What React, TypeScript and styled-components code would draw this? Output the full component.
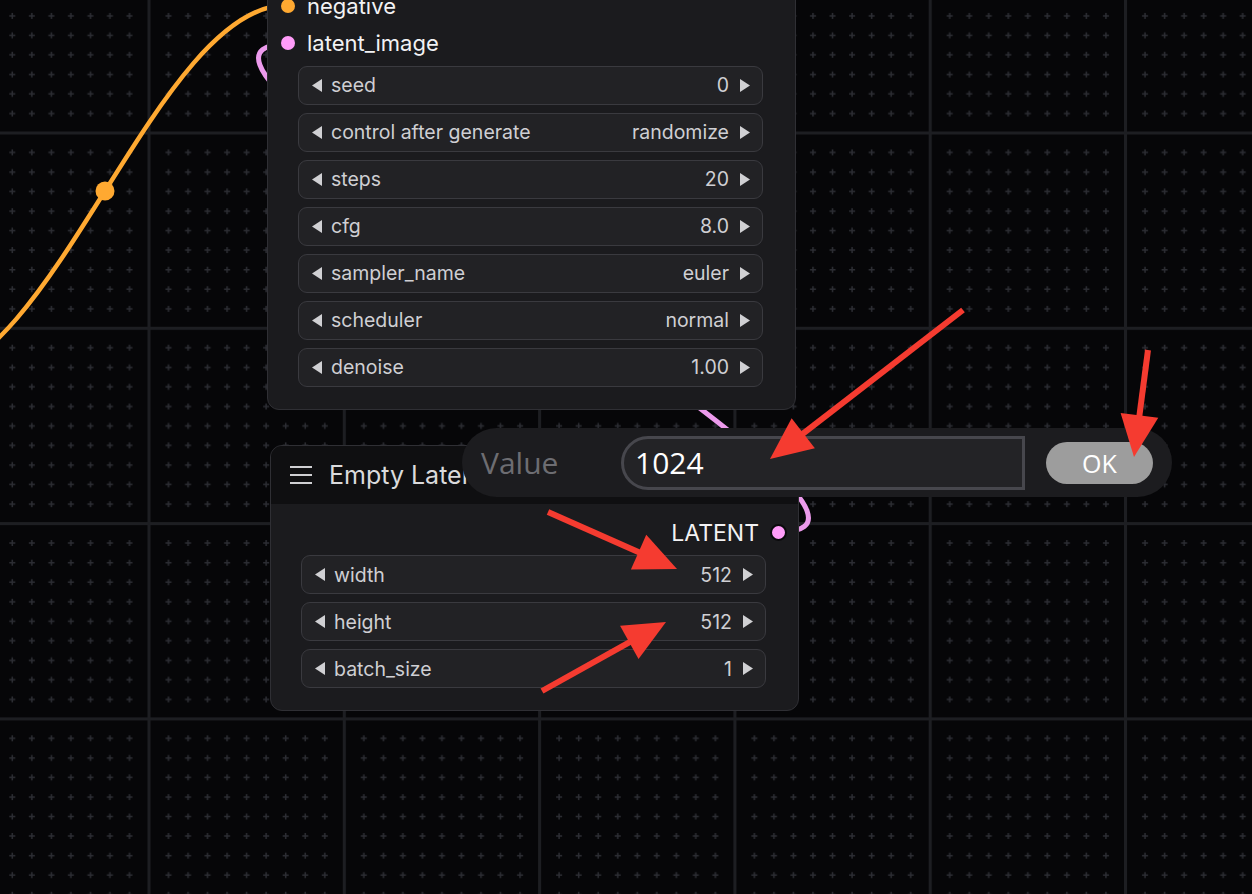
import React from "react";
import styled, { createGlobalStyle } from "styled-components";

const GlobalStyle = createGlobalStyle`
  html, body {
    margin: 0;
    padding: 0;
    background: #060608;
  }
  body {
    font-family: Inter, "Noto Sans", sans-serif;
    overflow: hidden;
  }
`;

const Canvas = styled.div`
  position: relative;
  width: 1252px;
  height: 894px;
  overflow: hidden;
  background: #060608;
`;

const Layer = styled.svg<{ $z: number }>`
  position: absolute;
  left: 0;
  top: 0;
  width: 1252px;
  height: 894px;
  z-index: ${(p) => p.$z};
  pointer-events: none;
`;

const Node = styled.div<{ $x: number; $y: number }>`
  position: absolute;
  left: ${(p) => p.$x}px;
  top: ${(p) => p.$y}px;
  width: 529px;
  box-sizing: border-box;
  background: #1b1b1e;
  border: 1px solid #2f2f34;
  border-radius: 12px;
  overflow: hidden;
  z-index: 2;
`;

const TitleBar = styled.div`
  height: 58px;
  display: flex;
  align-items: center;
  gap: 17px;
  padding-left: 19px;
  background: #0f0f11;
  color: #dadadc;
  font-size: 25px;
  white-space: nowrap;
`;

const Body = styled.div`
  padding: 10px 0 22px;
`;

const SlotRow = styled.div`
  height: 37px;
  display: flex;
  align-items: center;
  justify-content: space-between;
  font-size: 22px;
  color: #f2f2f4;
`;

const InputSlot = styled.div`
  display: flex;
  align-items: center;
  gap: 12px;
  padding-left: 13px;
`;

const OutputSlot = styled.div`
  display: flex;
  align-items: center;
  gap: 11px;
  padding-right: 11px;
  margin-left: auto;
  font-size: 23px;
`;

const Dot = styled.span<{ $color: string; $ring?: boolean }>`
  width: ${(p) => (p.$ring ? 17 : 14)}px;
  height: ${(p) => (p.$ring ? 17 : 14)}px;
  box-sizing: border-box;
  border-radius: 50%;
  background: ${(p) => p.$color};
  border: ${(p) => (p.$ring ? "2px solid #0a0a0c" : "none")};
`;

const WidgetList = styled.div`
  display: flex;
  flex-direction: column;
  gap: 8px;
  padding: 4px 32px 0 30px;
`;

const Widget = styled.div`
  height: 39px;
  box-sizing: border-box;
  display: flex;
  align-items: center;
  padding: 0 12px 0 13px;
  border: 1.5px solid #3a3a3f;
  border-radius: 9px;
  background: #222225;
  color: #cfcfd3;
  font-size: 19.5px;
`;

const WidgetLabel = styled.span`
  margin-left: 9px;
  flex: 1;
`;

const WidgetValue = styled.span`
  margin-right: 11px;
`;

const Dialog = styled.div`
  position: absolute;
  left: 462px;
  top: 428px;
  width: 710px;
  height: 69px;
  box-sizing: border-box;
  display: flex;
  align-items: center;
  padding: 0 19px;
  border-radius: 35px;
  background: #1c1c1f;
  font-family: "Open Sans", "Liberation Sans", sans-serif;
  z-index: 3;
`;

const DialogLabel = styled.span`
  width: 140px;
  font-size: 30px;
  color: #6d6d72;
`;

const ValueInput = styled.input`
  width: 404px;
  height: 54px;
  box-sizing: border-box;
  padding: 0 0 0 11px;
  border: 3px solid #47474d;
  border-radius: 27px 0 0 27px;
  background: #232326;
  color: #ffffff;
  font-family: inherit;
  font-size: 30px;
  outline: none;
`;

const OkButton = styled.button`
  width: 107px;
  height: 42px;
  margin-left: 21px;
  border: none;
  border-radius: 21px;
  background: #9d9d9d;
  color: #ffffff;
  font-family: inherit;
  font-size: 25px;
  padding: 0;
`;

const Arrowhead = ({ dir }: { dir: "left" | "right" }) => (
  <svg width="10" height="13" viewBox="0 0 10 13">
    <polygon
      points={dir === "left" ? "10,0 10,13 0,6.5" : "0,0 0,13 10,6.5"}
      fill="#d0d0d3"
    />
  </svg>
);

const MenuIcon = () => (
  <svg width="22" height="18" viewBox="0 0 22 18">
    <rect x="0" y="0" width="22" height="2" fill="#cfcfd2" />
    <rect x="0" y="8" width="22" height="2" fill="#cfcfd2" />
    <rect x="0" y="16" width="22" height="2" fill="#cfcfd2" />
  </svg>
);

type Slot = { name: string; color: string };
type WidgetData = { label: string; value: string };

const ORANGE = "#ffa931";
const PINK = "#ff9cf9";

const ksamplerInputs: Slot[] = [
  { name: "model", color: "#b39ddb" },
  { name: "positive", color: ORANGE },
  { name: "negative", color: ORANGE },
  { name: "latent_image", color: PINK },
];

const ksamplerWidgets: WidgetData[] = [
  { label: "seed", value: "0" },
  { label: "control after generate", value: "randomize" },
  { label: "steps", value: "20" },
  { label: "cfg", value: "8.0" },
  { label: "sampler_name", value: "euler" },
  { label: "scheduler", value: "normal" },
  { label: "denoise", value: "1.00" },
];

const latentWidgets: WidgetData[] = [
  { label: "width", value: "512" },
  { label: "height", value: "512" },
  { label: "batch_size", value: "1" },
];

const WidgetRow = ({ w }: { w: WidgetData }) => (
  <Widget>
    <Arrowhead dir="left" />
    <WidgetLabel>{w.label}</WidgetLabel>
    <WidgetValue>{w.value}</WidgetValue>
    <Arrowhead dir="right" />
  </Widget>
);

// background grid: a major line every 195px, small crosses every tenth of that
const GRID = 195.3;
const STEP = GRID / 10;

const GridPattern = () => {
  const crosses: string[] = [];
  for (let i = 1; i < 10; i++) {
    for (let j = 1; j < 10; j++) {
      const cx = 1.5 + i * STEP;
      const cy = 1.5 + j * STEP;
      crosses.push(`M${cx - 3} ${cy}H${cx + 3}M${cx} ${cy - 3}V${cy + 3}`);
    }
  }
  return (
    <pattern
      id="grid"
      x={147.5}
      y={131.5}
      width={GRID}
      height={GRID}
      patternUnits="userSpaceOnUse"
    >
      <rect x="0" y="0" width="3" height={GRID} fill="#1d1e22" />
      <rect x="0" y="0" width={GRID} height="3" fill="#1d1e22" />
      <path d={crosses.join("")} stroke="#2c2d33" strokeWidth="1.5" />
    </pattern>
  );
};

const RedArrow = ({ x1, y1, x2, y2 }: { x1: number; y1: number; x2: number; y2: number }) => {
  const len = Math.hypot(x2 - x1, y2 - y1);
  const ux = (x2 - x1) / len;
  const uy = (y2 - y1) / len;
  const head = 42;
  const half = 19;
  const bx = x2 - ux * head;
  const by = y2 - uy * head;
  const pts = `${x2},${y2} ${bx - uy * half},${by + ux * half} ${bx + uy * half},${by - ux * half}`;
  return (
    <g>
      <line x1={x1} y1={y1} x2={bx + ux * 4} y2={by + uy * 4} stroke="#f53b30" strokeWidth="6" />
      <polygon points={pts} fill="#f53b30" />
    </g>
  );
};

export default function App() {
  return (
    <>
      <GlobalStyle />
      <Canvas>
        <Layer $z={1} viewBox="0 0 1252 894">
          <defs>
            <GridPattern />
          </defs>
          <rect x="0" y="0" width="1252" height="894" fill="url(#grid)" />
          <path
            d="M -77 377 C 53 377, 157 5, 287 5"
            stroke={ORANGE}
            strokeWidth="4.5"
            fill="none"
          />
          <circle cx="105" cy="191" r="9.5" fill={ORANGE} />
          <path
            d="M 779 532 C 979 532, 88 44, 288 44"
            stroke="#ec9aec"
            strokeWidth="5"
            fill="none"
          />
        </Layer>

        <Node $x={267} $y={-155.5}>
          <TitleBar>
            <MenuIcon />
            KSampler
          </TitleBar>
          <Body>
            {ksamplerInputs.map((s, i) => (
              <SlotRow key={s.name}>
                <InputSlot>
                  <Dot $color={s.color} />
                  {s.name}
                </InputSlot>
                {i === 0 && (
                  <OutputSlot>
                    LATENT
                    <Dot $color={PINK} $ring />
                  </OutputSlot>
                )}
              </SlotRow>
            ))}
            <WidgetList>
              {ksamplerWidgets.map((w) => (
                <WidgetRow key={w.label} w={w} />
              ))}
            </WidgetList>
          </Body>
        </Node>

        <Node $x={270} $y={445}>
          <TitleBar>
            <MenuIcon />
            Empty Latent Image
          </TitleBar>
          <Body>
            <SlotRow>
              <OutputSlot>
                LATENT
                <Dot $color={PINK} $ring />
              </OutputSlot>
            </SlotRow>
            <WidgetList>
              {latentWidgets.map((w) => (
                <WidgetRow key={w.label} w={w} />
              ))}
            </WidgetList>
          </Body>
        </Node>

        <Dialog>
          <DialogLabel>Value</DialogLabel>
          <ValueInput defaultValue="1024" readOnly />
          <OkButton>OK</OkButton>
        </Dialog>

        <Layer $z={4} viewBox="0 0 1252 894">
          <RedArrow x1={963} y1={310} x2={770} y2={459} />
          <RedArrow x1={1148} y1={350} x2={1134} y2={457} />
          <RedArrow x1={548} y1={512} x2={677} y2={569} />
          <RedArrow x1={542} y1={691} x2={666} y2={622} />
        </Layer>
      </Canvas>
    </>
  );
}
